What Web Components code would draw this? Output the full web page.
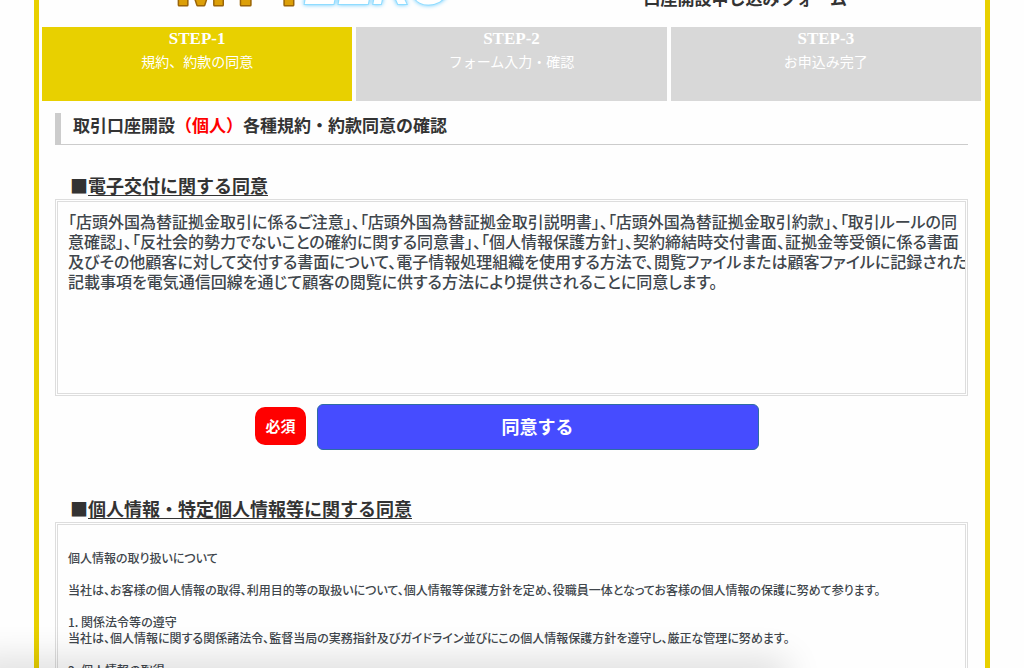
<!DOCTYPE html>
<html lang="ja">
<head>
<meta charset="utf-8">
<meta name="viewport" content="width=device-width, initial-scale=1">
<title>口座開設申し込みフォーム</title>
<style>
html { scrollbar-width: none; background: #fefefe; }
body { margin: 0; color: #333; font-family: "Noto Sans CJK JP", sans-serif; }
</style>
</head>
<body>
<account-page>
  <site-header slot="header">口座開設申し込みフォーム</site-header>
  <step-list slot="steps">
    <step-item active><span slot="step">STEP-1</span>規約、約款の同意</step-item>
    <step-item><span slot="step">STEP-2</span>フォーム入力・確認</step-item>
    <step-item><span slot="step">STEP-3</span>お申込み完了</step-item>
  </step-list>
  <page-title>取引口座開設<em>（個人）</em>各種規約・約款同意の確認</page-title>
  <agreement-section heading="電子交付に関する同意">「店頭外国為替証拠金取引に係るご注意」、「店頭外国為替証拠金取引説明書」、「店頭外国為替証拠金取引約款」、「取引ルールの同<br>意確認」、「反社会的勢力でないことの確約に関する同意書」、「個人情報保護方針」、契約締結時交付書面、証拠金等受領に係る書面<br>及びその他顧客に対して交付する書面について、電子情報処理組織を使用する方法で、閲覧ファイルまたは顧客ファイルに記録された<br>記載事項を電気通信回線を通じて顧客の閲覧に供する方法により提供されることに同意します。</agreement-section>
  <consent-row></consent-row>
  <agreement-section small heading="個人情報・特定個人情報等に関する同意"><br>個人情報の取り扱いについて<br><br>当社は、お客様の個人情報の取得、利用目的等の取扱いについて、個人情報等保護方針を定め、役職員一体となってお客様の個人情報の保護に努めて参ります。<br><br>1. 関係法令等の遵守<br>当社は、個人情報に関する関係諸法令、監督当局の実務指針及びガイドライン並びにこの個人情報保護方針を遵守し、厳正な管理に努めます。<br><br>2. 個人情報の取得</agreement-section>
</account-page>
<status-shade></status-shade>

<script>
function define(name, markup, setup) {
  const template = document.createElement('template');
  template.innerHTML = markup;
  customElements.define(name, class extends HTMLElement {
    constructor() {
      super();
      this.attachShadow({ mode: 'open' }).append(template.content.cloneNode(true));
    }
    connectedCallback() { if (setup) setup(this); }
  });
}

define('account-page', `
  <style>
    :host { display: block; margin: 0 34px; padding: 0 4px 0 3px; border: solid #e8d000; border-width: 0 5px; }
    main { padding: 12px 13px 40px; }
  </style>
  <slot name="header"></slot>
  <slot name="steps"></slot>
  <main><slot></slot></main>`);

define('site-header', `
  <style>
    :host { display: flex; justify-content: space-between; align-items: flex-end; height: 27px; overflow: hidden; }
    svg { display: block; width: 300px; height: 70px; margin-left: 132px; flex: none; }
    .mt { font: bold 62px "Liberation Sans", sans-serif; fill: #dc9f08; stroke: #9b6508; stroke-width: 3; paint-order: stroke; stroke-linejoin: round; }
    .zero { font: italic bold 52px "Liberation Sans", sans-serif; fill: #fff; stroke: #8fdcff; stroke-width: 2; paint-order: stroke; filter: drop-shadow(0 0 2px #5cc8ff); }
    p { margin: 0 134px 17px 0; font-size: 17px; line-height: 24px; font-weight: 700; white-space: nowrap; }
  </style>
  <svg role="img" aria-label="MT4ZERO" viewBox="0 0 300 70">
    <text class="mt" x="1" y="48">MT4</text>
    <text class="zero" x="132" y="47">ZERO</text>
  </svg>
  <p><slot></slot></p>`);

define('step-list', `
  <style>:host { display: grid; grid-template-columns: repeat(3, 1fr); gap: 4px; }</style>
  <slot></slot>`);

define('step-item', `
  <style>
    :host { display: block; box-sizing: border-box; height: 74px; padding-top: 1px; background: #d8d8d8; color: #fff; text-align: center; font-size: 14px; line-height: 22px; }
    :host([active]) { background: #e8d000; }
    strong { display: block; font: bold 17px/22px "Liberation Serif", serif; }
  </style>
  <strong><slot name="step"></slot></strong>
  <slot></slot>`);

define('page-title', `
  <style>
    :host { display: block; border-left: 6px solid #ccc; border-bottom: 1px solid #ccc; margin-bottom: 30px; }
    h1 { margin: 0; padding: 0 12px 7px; font-size: 17px; line-height: 24px; font-weight: 700; }
    ::slotted(em) { font-style: normal; color: #f00; }
  </style>
  <h1><slot></slot></h1>`);

define('agreement-section', `
  <style>
    :host { display: block; }
    h2 { margin: 0; padding: 0 0 4px 15px; font-size: 18px; line-height: 20px; font-weight: 700; }
    u { text-underline-offset: 2px; text-decoration-thickness: 1px; text-decoration-skip-ink: none; }
    .box { box-sizing: border-box; height: 197px; padding: 9px 10px; overflow: hidden auto; scrollbar-width: none; border: 3px double #ddd; color: #40464c; font-size: 16px; line-height: 20px; font-weight: 500; font-feature-settings: "palt"; white-space: nowrap; }
    :host([small]) .box { font-size: 12px; line-height: 16px; }
  </style>
  <h2>■<u></u></h2>
  <div class="box" tabindex="0"><slot></slot></div>`,
  host => { host.shadowRoot.querySelector('u').textContent = host.getAttribute('heading'); });

define('consent-row', `
  <style>
    :host { display: flex; align-items: center; justify-content: center; gap: 11px; margin: 8px 9px 48px 0; }
    .required { padding: 0 10px; border-radius: 10px; background: #f00; color: #fff; font-size: 15px; line-height: 38px; font-weight: 700; margin-bottom: 3px; }
    button { width: 442px; height: 46px; padding: 0 0 3px; border: 1px solid #2e6da4; border-radius: 6px; background: #464cff; color: #fff; font: inherit; font-size: 18px; line-height: 26px; font-weight: 700; }
  </style>
  <span class="required" id="required">必須</span>
  <button type="button" aria-describedby="required">同意する</button>`);

define('status-shade', `
  <style>
    :host { position: fixed; left: 0; right: 22%; bottom: -20px; height: 20px; pointer-events: none; box-shadow: -20px 0 36px 8px rgba(0, 0, 0, .14); }
  </style>`);
</script>
</body>
</html>
